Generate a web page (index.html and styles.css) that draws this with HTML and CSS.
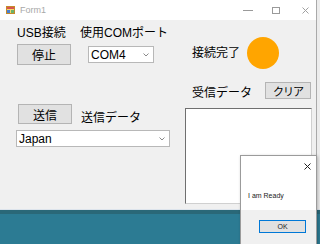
FILE: index.html
```html
<!DOCTYPE html>
<html lang="ja">
<head>
<meta charset="utf-8">
<title>Form1</title>
<link rel="stylesheet" href="styles.css">
</head>
<body>
<div class="screen">
  <div class="window">
    <div class="titlebar">
      <svg class="appicon" width="9" height="8" viewBox="0 0 9 8">
        <rect x="0.5" y="0.5" width="8" height="7" fill="#f3d66b" stroke="#c58a2a"/>
        <rect x="1" y="1" width="7" height="2" fill="#d9534f"/>
        <rect x="1" y="4" width="3" height="3" fill="#4a7fd0"/>
        <rect x="5" y="4" width="3" height="3" fill="#6bb36b"/>
      </svg>
      <span class="title">Form1</span>
      <div class="controls">
        <span class="ctl-min"></span>
        <span class="ctl-max"></span>
        <svg class="ctl-close" width="7" height="7" viewBox="0 0 7 7"><path d="M0.5 0.5L6.5 6.5M6.5 0.5L0.5 6.5" stroke="#a0a0a0" stroke-width="1"/></svg>
      </div>
    </div>
    <div class="client">
      <div class="toprow">
        <div class="group g1">
          <div class="label">USB接続</div>
          <button class="btn stop">停止</button>
        </div>
        <div class="group g2">
          <div class="label">使用COMポート</div>
          <div class="combo com"><span>COM4</span>
            <svg class="chev" width="6" height="4" viewBox="0 0 6 4"><path d="M0.5 0.5L3 3L5.5 0.5" fill="none" stroke="#8a8a8a"/></svg>
          </div>
        </div>
        <div class="status">
          <span class="label">接続完了</span>
          <span class="lamp"></span>
        </div>
      </div>
      <div class="midrow">
        <div class="send">
          <div class="sendhead">
            <button class="btn sendbtn">送信</button>
            <span class="label sendlabel">送信データ</span>
          </div>
          <div class="combo wide"><span>Japan</span>
            <svg class="chev" width="6" height="4" viewBox="0 0 6 4"><path d="M0.5 0.5L3 3L5.5 0.5" fill="none" stroke="#8a8a8a"/></svg>
          </div>
        </div>
        <div class="recv">
          <div class="recvhead">
            <span class="label recvlabel">受信データ</span>
            <button class="btn clear">クリア</button>
          </div>
          <div class="textbox"></div>
        </div>
      </div>
    </div>
  </div>
  <div class="desk"></div>

  <div class="msgbox">
    <div class="msgbody">
      <svg class="msgclose" width="7" height="7" viewBox="0 0 7 7"><path d="M0.5 0.5L6.5 6.5M6.5 0.5L0.5 6.5" stroke="#222" stroke-width="1"/></svg>
      <div class="msgtext">I am Ready</div>
    </div>
    <div class="msgfoot">
      <button class="okbtn">OK</button>
    </div>
  </div>
</div>
</body>
</html>
```

FILE: styles.css
```css
* { box-sizing: border-box; }
html, body { margin: 0; padding: 0; }
body {
  width: 320px;
  height: 244px;
  overflow: hidden;
  background: #ececec;
  font-family: "Liberation Sans", "Noto Sans CJK JP", sans-serif;
}
.screen {
  position: relative;
  width: 320px;
  height: 244px;
  display: flex;
  flex-direction: column;
}
.window {
  width: 317px;
  height: 209px;
  flex-shrink: 0;
  background: #f0f0f0;
  border-right: 1px solid #a9a9a9;
  display: flex;
  flex-direction: column;
}
.titlebar {
  height: 20px;
  flex-shrink: 0;
  background: #fff;
  display: flex;
  align-items: center;
}
.appicon { margin-left: 6px; }
.title {
  margin-left: 5px;
  font-size: 9px;
  color: #a8a8a8;
}
.controls {
  margin-left: auto;
  display: flex;
  align-items: center;
  height: 20px;
}
.ctl-min {
  width: 10px;
  height: 1px;
  background: #9a9a9a;
  margin-top: 1px;
}
.ctl-max {
  width: 8px;
  height: 7px;
  border: 1px solid #9a9a9a;
  margin-left: 19px;
}
.ctl-close {
  margin-left: 22px;
  margin-right: 7px;
}

.client {
  flex: 1;
  padding: 6px 0 0 16px;
  display: flex;
  flex-direction: column;
}
.label {
  font-size: 12px;
  line-height: 14px;
  color: #000;
  white-space: nowrap;
}
.toprow {
  display: flex;
  align-items: flex-start;
}
.g1 { width: 64px; padding-left: 1px; }
.g2 { width: 112px; }
.btn {
  font-family: inherit;
  font-size: 12px;
  color: #000;
  background: #e1e1e1;
  border: 1px solid #b4b4b4;
  padding: 0;
  margin: 0;
  display: flex;
  align-items: center;
  justify-content: center;
}
.stop { width: 54px; height: 21px; margin-top: 4px; }
.combo {
  background: #fff;
  border: 1px solid #b8b8b8;
  height: 17px;
  display: flex;
  align-items: center;
  font-size: 12px;
  color: #000;
  padding-left: 2px;
}
.chev { margin-left: auto; margin-right: 4px; }
.com { width: 66px; margin: 6px 0 0 8px; }
.status {
  display: flex;
  align-items: center;
  margin-top: 11px;
}
.lamp {
  width: 32px;
  height: 32px;
  border-radius: 50%;
  background: #ffa500;
  margin-left: 7px;
}

.midrow { display: flex; }
.send { width: 169px; }
.sendhead {
  display: flex;
  align-items: flex-end;
  margin-top: 35px;
}
.sendbtn { width: 54px; height: 20px; margin: 0 0 1px 2px; }
.sendlabel { margin-left: 9px; }
.wide { width: 154px; margin-top: 5px; }
.recv { width: 127px; }
.recvhead {
  display: flex;
  align-items: flex-end;
  height: 18px;
  margin-top: 13px;
}
.recvlabel { margin-left: 7px; }
.clear {
  width: 46px;
  height: 17px;
  margin: 0 1px 1px auto;
  font-size: 11px;
  letter-spacing: -1px;
}
.textbox {
  margin-top: 8px;
  height: 96px;
  background: #fff;
  border: 1px solid #6f6f6f;
  border-right-color: #d0d0d0;
  border-bottom-color: #d0d0d0;
}

.desk {
  flex: 1;
  background: #2c7b93;
  border-top: 1px solid #dde4ec;
  box-shadow: inset 0 4px 0 #2a6878;
}

.msgbox {
  position: absolute;
  left: 240px;
  top: 155px;
  width: 77px;
  height: 100px;
  border: 1px solid #9b9b9b;
  background: #f0f0f0;
  display: flex;
  flex-direction: column;
  box-shadow: 1px 1px 3px rgba(0, 0, 0, 0.25);
}
.msgbody {
  position: relative;
  height: 54px;
  background: #fff;
}
.msgclose {
  position: absolute;
  left: 63px;
  top: 7px;
}
.msgtext {
  padding: 35px 0 0 7px;
  font-size: 7px;
  line-height: 9px;
  color: #222;
  white-space: nowrap;
}
.msgfoot { padding: 10px 0 0 18px; }
.okbtn {
  width: 47px;
  height: 13px;
  padding: 0;
  margin: 0;
  border: 1px solid #0078d7;
  background: #e1e1e1;
  font-family: "Liberation Sans", sans-serif;
  font-size: 7px;
  color: #222;
  display: flex;
  align-items: center;
  justify-content: center;
}
```
